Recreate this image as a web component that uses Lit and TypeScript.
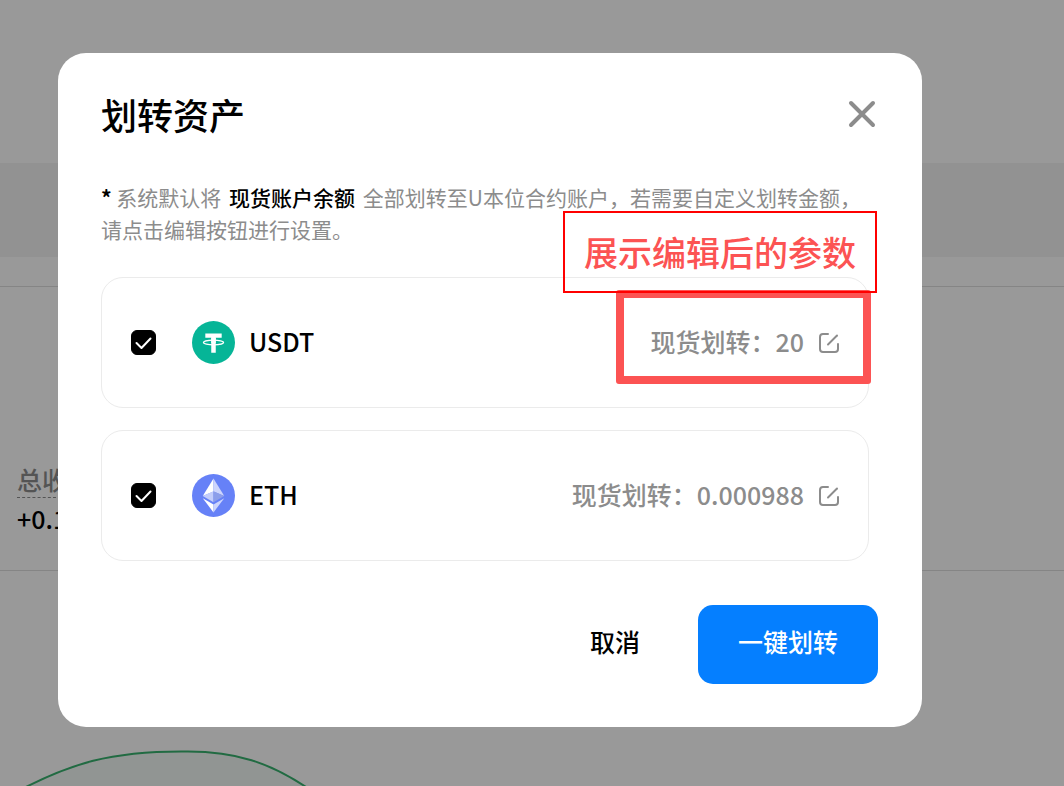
import { LitElement, html, css, svg } from "lit";
import { customElement, property } from "lit/decorators.js";

interface Asset {
  symbol: string;
  amount: string;
  note?: string;
}

const tetherIcon = svg`
  <circle cx="21" cy="21" r="21" fill="#06b597"></circle>
  <path d="M13 12.200h16v4.200h-5.800V31h-4.400V16.400H13z" fill="#fff"></path>
  <ellipse cx="21" cy="21" rx="9.800" ry="2.300" fill="none" stroke="#fff" stroke-width="1.300"></ellipse>
  <path d="M18.800 16.400h4.400v5.200h-4.400z" fill="#fff"></path>`;

const etherIcon = svg`
  <circle cx="21" cy="21" r="21" fill="#6681f7"></circle>
  <path d="M21 4.500 10.500 21.500 21 17z" fill="#fff"></path>
  <path d="M21 4.500 31.500 21.500 21 17z" fill="#cdd5fc"></path>
  <path d="M21 16.800 10.500 21.500 21 27.500z" fill="#c3cdfb"></path>
  <path d="M21 16.800 31.500 21.500 21 27.500z" fill="#8c9eea"></path>
  <path d="M10.500 23.700 21 29.800V37.500z" fill="#fff"></path>
  <path d="M31.500 23.700 21 29.800V37.500z" fill="#cdd5fc"></path>`;

@customElement("asset-row")
export class AssetRow extends LitElement {
  @property({ attribute: false }) asset!: Asset;

  static styles = css`
    :host {
      display: block;
    }
    .card {
      position: relative;
      display: flex;
      align-items: center;
      justify-content: space-between;
      box-sizing: border-box;
      min-height: 131px;
      padding: 0 29px;
      border: 1px solid #ebebeb;
      border-radius: 22px;
    }
    .pick {
      display: flex;
      align-items: center;
    }
    .box {
      appearance: none;
      width: 25px;
      height: 25px;
      margin: 0 36px 0 0;
      border-radius: 6px;
      border: 1px solid #000;
      background: #fff;
    }
    .box:checked {
      background: #000
        url("data:image/svg+xml,%3Csvg xmlns='http://www.w3.org/2000/svg' viewBox='0 0 25 25'%3E%3Cpath d='M5.500 13l5 5L19.500 8.500' fill='none' stroke='white' stroke-width='2' stroke-linecap='round' stroke-linejoin='round'/%3E%3C/svg%3E")
        center / 25px 25px no-repeat;
    }
    .coin {
      width: 43px;
      height: 43px;
      margin-right: 14px;
    }
    .symbol,
    .text {
      padding-bottom: 4px;
      font-size: 25px;
      line-height: 36px;
      font-weight: 500;
    }
    .symbol {
      color: #000;
    }
    .value {
      display: flex;
      align-items: center;
      color: #8c8c8c;
    }
    .edit {
      display: flex;
      margin-left: 15px;
      padding: 0;
      border: 0;
      background: none;
      color: inherit;
    }
    .edit svg {
      width: 20px;
      height: 20px;
    }
    .frame {
      position: absolute;
      top: 12px;
      right: -3px;
      box-sizing: border-box;
      width: 255px;
      height: 94px;
      border: 8px solid #fc5353;
      border-radius: 3px;
      pointer-events: none;
    }
    .note {
      position: absolute;
      top: -67px;
      right: -9px;
      box-sizing: border-box;
      height: 82px;
      padding: 0 19px;
      border: 2px solid #f00;
      color: #fc5353;
      font-size: 34px;
      line-height: 78px;
      font-weight: 500;
      white-space: nowrap;
    }
  `;

  render() {
    const { symbol, amount, note } = this.asset;
    return html`
      <div class="card">
        <label class="pick">
          <input class="box" type="checkbox" checked />
          <svg class="coin" viewBox="0 0 42 42" aria-hidden="true">
            ${symbol === "USDT" ? tetherIcon : etherIcon}
          </svg>
          <span class="symbol">${symbol}</span>
        </label>
        <div class="value">
          <span class="text">现货划转：</span><span class="text">${amount}</span>
          <button class="edit" type="button" aria-label="编辑">
            <svg
              viewBox="0 0 20 20"
              fill="none"
              stroke="currentColor"
              stroke-width="2"
              stroke-linecap="round"
            >
              <path d="M9 1H4Q1 1 1 4V16Q1 19 4 19H16Q19 19 19 16V11"></path>
              <path d="M9 11.500 18 2.500"></path>
            </svg>
          </button>
        </div>
        ${note
          ? html`<div class="frame"></div>
              <div class="note">${note}</div>`
          : ""}
      </div>
    `;
  }
}

@customElement("app-root")
export class AppRoot extends LitElement {
  private assets: Asset[] = [
    { symbol: "USDT", amount: "20", note: "展示编辑后的参数" },
    { symbol: "ETH", amount: "0.000988" },
  ];

  static styles = css`
    :host {
      display: block;
      position: relative;
      height: 100vh;
      overflow: hidden;
      background: #fff;
      color: #000;
      font-family: "Noto Sans CJK SC", "Noto Sans", sans-serif;
    }
    .page {
      display: flex;
      flex-direction: column;
      height: 100%;
    }
    .top {
      flex: 0 0 163px;
    }
    .band {
      flex: 0 0 94px;
      background: #f4f4f4;
    }
    .gap {
      flex: 0 0 29px;
      border-bottom: 1px solid #dedede;
    }
    .stats {
      flex: 0 0 284px;
      box-sizing: border-box;
      padding: 176px 17px 0;
      border-bottom: 1px solid #dedede;
    }
    .stat-label {
      display: inline-block;
      padding-bottom: 2px;
      border-bottom: 1px dashed #8c8c8c;
      color: #8c8c8c;
      font-size: 25px;
      line-height: 32px;
      font-weight: 500;
    }
    .stat-value {
      font-size: 25px;
      line-height: 40px;
      font-weight: 500;
    }
    .chart {
      flex: 1;
      display: flex;
      align-items: flex-end;
    }
    .chart svg {
      width: 340px;
      height: 40px;
    }
    .mask {
      position: absolute;
      inset: 0;
      padding: 53px 142px 0 58px;
      background: rgba(0, 0, 0, 0.4);
    }
    .dialog {
      padding: 39px 44px 43px 43px;
      border-radius: 28px;
      background: #fff;
    }
    .head {
      display: flex;
      align-items: center;
      justify-content: space-between;
    }
    .title {
      margin: 0;
      font-size: 36px;
      line-height: 44px;
      font-weight: 500;
    }
    .close {
      display: flex;
      padding: 0;
      border: 0;
      background: none;
      color: #8c8c8c;
    }
    .close svg {
      width: 32px;
      height: 32px;
    }
    .tip {
      margin: 45px 0 32px;
      color: #8c8c8c;
      font-size: 21px;
      line-height: 32px;
    }
    .star {
      color: #000;
      font-weight: 700;
    }
    .tip strong {
      margin: 0 3px;
      color: #000;
      font-weight: 500;
    }
    .list {
      display: grid;
      gap: 22px;
      padding-right: 9px;
    }
    .foot {
      display: flex;
      justify-content: flex-end;
      margin-top: 44px;
    }
    .btn {
      height: 79px;
      padding: 0 40px 8px;
      border: 0;
      border-radius: 15px;
      background: none;
      color: #000;
      font: 500 25px / 36px "Noto Sans CJK SC", sans-serif;
    }
    .cancel {
      padding: 0 58px 8px;
    }
    .primary {
      background: #057fff;
      color: #fff;
    }
  `;

  render() {
    return html`
      <main class="page">
        <div class="top"></div>
        <div class="band"></div>
        <div class="gap"></div>
        <section class="stats">
          <div class="stat-label">总收益</div>
          <div class="stat-value">+0.1</div>
        </section>
        <section class="chart">
          <svg viewBox="0 0 340 40" aria-hidden="true">
            <path
              d="M20 44C70 18 110 5 185 5.500C235 5 270 16 312 45"
              fill="#f2f8f5"
              stroke="#38b26f"
              stroke-width="2"
            ></path>
          </svg>
        </section>
      </main>
      <div class="mask">
        <div class="dialog" role="dialog" aria-modal="true" aria-labelledby="title">
          <header class="head">
            <h1 class="title" id="title">划转资产</h1>
            <button class="close" type="button" aria-label="关闭">
              <svg viewBox="0 0 32 32" stroke="currentColor" stroke-width="4" stroke-linecap="round">
                <path d="M5 5 27 27M27 5 5 27"></path>
              </svg>
            </button>
          </header>
          <p class="tip">
            <span class="star">*</span> 系统默认将 <strong>现货账户余额</strong>
            全部划转至U本位合约账户，若需要自定义划转金额，请点击编辑按钮进行设置。
          </p>
          <div class="list">
            ${this.assets.map((asset) => html`<asset-row .asset=${asset}></asset-row>`)}
          </div>
          <footer class="foot">
            <button class="btn cancel" type="button">取消</button>
            <button class="btn primary" type="button">一键划转</button>
          </footer>
        </div>
      </div>
    `;
  }
}
